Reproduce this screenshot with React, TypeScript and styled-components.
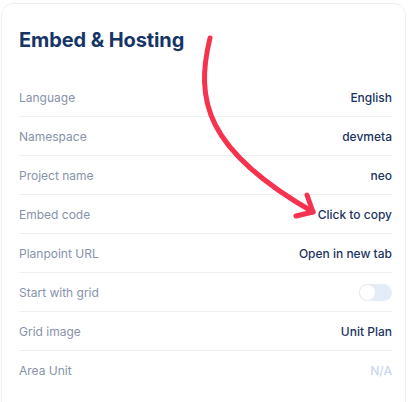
import styled, {createGlobalStyle} from 'styled-components';

type Row = {
  label: string;
  value?: string;
  muted?: boolean;
  toggle?: boolean;
}

const rows: Row[] = [
  {label: 'Language', value: 'English'},
  {label: 'Namespace', value: 'devmeta'},
  {label: 'Project name', value: 'neo'},
  {label: 'Embed code', value: 'Click to copy'},
  {label: 'Planpoint URL', value: 'Open in new tab'},
  {label: 'Start with grid', toggle: true},
  {label: 'Grid image', value: 'Unit Plan'},
  {label: 'Area Unit', value: 'N/A', muted: true},
];

export default function App() {
  return (
    <Page>
      <GlobalStyle/>
      <Card>
        <Title>Embed &amp; Hosting</Title>
        <List>
          {rows.map((row) => (
            <Item key={row.label}>
              <Label>{row.label}</Label>
              {row.toggle ? (
                <Toggle><Knob/></Toggle>
              ) : (
                <Value $muted={row.muted}>{row.value}</Value>
              )}
            </Item>
          ))}
        </List>
      </Card>
      <Arrow viewBox="0 0 410 402" width="410" height="402">
        <path d="M210 38 C 195 100, 205 150, 313 212" fill="none" stroke="#f5334f" strokeWidth="5" strokeLinecap="round"/>
        <path d="M307 195 L313 212 L296 216" fill="none" stroke="#f5334f" strokeWidth="5" strokeLinecap="round" strokeLinejoin="round"/>
      </Arrow>
    </Page>
  )
}

const GlobalStyle = createGlobalStyle `
  html, body {
    margin: 0;
    padding: 0;
    background: #fff;
  }

  body {
    font-family: Inter, "Noto Sans", sans-serif;
  }
`;

const Page = styled.div `
  position: relative;
  width: 410px;
  height: 402px;
  overflow: hidden;
  padding: 3px 4px 0 1px;
  box-sizing: border-box;
`;

const Card = styled.div `
  border: 1px solid #eceff3;
  border-radius: 12px;
  padding: 24px 13px 20px 17px;
  background: #fff;
  min-height: 420px;
  box-sizing: border-box;
`;

const Title = styled.h2 `
  margin: 0;
  font-size: 20px;
  line-height: 24px;
  font-weight: 700;
  color: #163567;
  letter-spacing: -0.1px;
`;

const List = styled.div `
  display: flex;
  flex-direction: column;
  margin-top: 26px;
`;

const Item = styled.div `
  display: flex;
  align-items: center;
  justify-content: space-between;
  height: 38px;
  border-bottom: 1px solid #edf0f4;

  &:last-child {
    border-bottom: none;
  }
`;

const Label = styled.span `
  font-size: 12px;
  color: #8793aa;
`;

const Value = styled.span<{$muted?: boolean}> `
  font-size: 12px;
  font-weight: 500;
  color: ${({$muted}) => $muted ? '#cbd7ec' : '#1c3461'};
`;

const Toggle = styled.div `
  width: 33px;
  height: 17px;
  border-radius: 9px;
  background: #e4ecfa;
  display: flex;
  align-items: center;
  padding: 0 1px;
  box-sizing: border-box;
`;

const Knob = styled.div `
  width: 15px;
  height: 15px;
  border-radius: 50%;
  background: #fff;
  box-shadow: 0 0 0 1px #e8ecf2;
`;

const Arrow = styled.svg `
  position: absolute;
  left: 0;
  top: 0;
  pointer-events: none;
`;
